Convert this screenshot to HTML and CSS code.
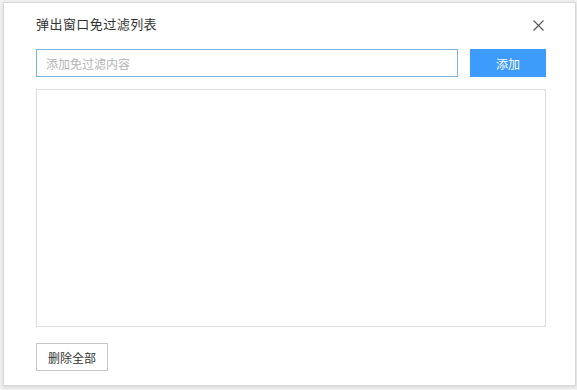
FILE: index.html
```html
<!DOCTYPE html>
<html lang="zh-CN">
<head>
<meta charset="utf-8">
<title>弹出窗口免过滤列表</title>
<link rel="stylesheet" href="styles.css">
</head>
<body>
<div class="dialog">
  <div class="header">
    <span class="title">弹出窗口免过滤列表</span>
    <span class="close" aria-label="关闭">
      <svg width="11" height="11" viewBox="0 0 11 11"><path d="M0.5 0.5L10.5 10.5M10.5 0.5L0.5 10.5" stroke="#555" stroke-width="1.1" fill="none"/></svg>
    </span>
  </div>
  <div class="add-row">
    <input class="add-input" type="text" placeholder="添加免过滤内容">
    <button class="btn-primary">添加</button>
  </div>
  <div class="list-box"></div>
  <div class="footer">
    <button class="btn-default">删除全部</button>
  </div>
</div>
</body>
</html>
```
FILE: styles.css
```css
html, body {
  margin: 0;
  padding: 0;
  font-family: "Noto Sans CJK SC", "Microsoft YaHei", sans-serif;
}
body {
  padding: 2px 1px 0 3px;
  height: 390px;
  box-sizing: border-box;
  background-color: #f1f1f1;
}
.dialog {
  box-sizing: border-box;
  width: 573px;
  height: 384px;
  background: #fff;
  border: 1px solid #d8d8d8;
  box-shadow: 0 1px 4px rgba(0, 0, 0, 0.12);
  padding: 0 29px 0 32px;
}
.header {
  display: flex;
  align-items: center;
  justify-content: space-between;
  height: 20px;
  padding-top: 11px;
  margin-bottom: 15px;
}
.title {
  font-size: 13px;
  letter-spacing: 0.45px;
  color: #333;
  line-height: 20px;
}
.close {
  display: flex;
  margin-right: 2px;
  margin-top: 2px;
}
.add-row {
  display: flex;
  gap: 12px;
  height: 28px;
}
.add-input {
  flex: 1;
  box-sizing: border-box;
  height: 28px;
  margin: 0;
  border: 1px solid #7fb2da;
  padding: 0 9px;
  font-family: inherit;
  font-size: 12px;
  color: #333;
  outline: none;
}
.add-input::placeholder {
  color: #b4b4b4;
}
.btn-primary {
  width: 76px;
  height: 28px;
  margin: 0;
  border: none;
  background: #3d9bfc;
  color: #fff;
  font-family: inherit;
  font-size: 12px;
  padding: 0;
}
.list-box {
  box-sizing: border-box;
  margin-top: 12px;
  height: 238px;
  border: 1px solid #dcdcdc;
}
.footer {
  display: flex;
  margin-top: 16px;
}
.btn-default {
  box-sizing: border-box;
  width: 72px;
  height: 28px;
  margin: 0;
  padding: 0;
  background: #fff;
  border: 1px solid #c6c6c6;
  color: #333;
  font-family: inherit;
  font-size: 12px;
}
```
